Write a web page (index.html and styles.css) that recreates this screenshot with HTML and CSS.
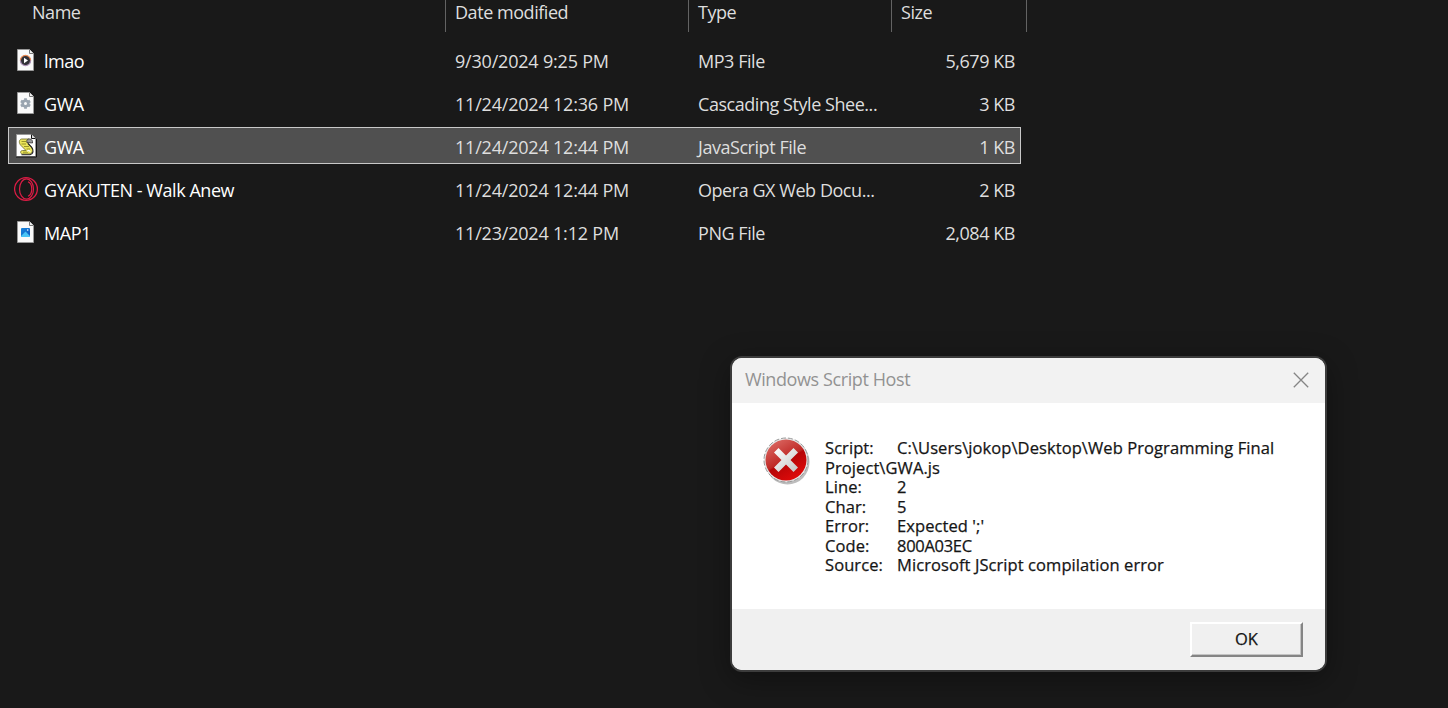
FILE: index.html
```html
<!DOCTYPE html>
<html lang="en">
<head>
<meta charset="utf-8">
<title>Files</title>
<link rel="stylesheet" href="styles.css">
</head>
<body>
<main class="explorer">
  <div class="head">
    <div class="col first"><span>Name</span></div>
    <div class="col"><span>Date modified</span></div>
    <div class="col"><span>Type</span></div>
    <div class="col"><span>Size</span></div>
  </div>
  <div class="row">
    <svg class="icon" viewBox="0 0 26 26"><path d="M3.500 2.500h12l4 4v17h-16z" fill="#f9f9f9" stroke="#999"/><path d="M15.500 2.500v4h4" fill="#eee" stroke="#777"/><circle cx="11.500" cy="13.500" r="5.100" fill="#303036"/><path d="M6.400 13.500a5.100 5.100 0 0 1 10.200 0" fill="none" stroke="#e98952" stroke-width="1.200"/><path d="M6.400 13.500a5.100 5.100 0 0 0 10.200 0" fill="none" stroke="#ac91b7" stroke-width="1.200"/><path d="M10 10.800v5.400l4-2.700z" fill="#fff"/></svg>
    <span class="name">lmao</span><span class="date">9/30/2024 9:25 PM</span><span class="type">MP3 File</span><span class="size">5,679 KB</span>
  </div>
  <div class="row">
    <svg class="icon" viewBox="0 0 26 26"><path d="M3.500 2.500h12l4 4v17h-16z" fill="#f9f9f9" stroke="#999"/><path d="M15.500 2.500v4h4" fill="#eee" stroke="#777"/><circle cx="11.500" cy="13.500" r="2.800" fill="none" stroke="#9aa5b0" stroke-width="2.600"/><path d="M11.500 8.200v2.200M11.500 16.600v2.200M6.900 10.900l2 1.100M14.100 15l2 1.100M16.100 10.900l-2 1.100M8.900 15l-2 1.100" stroke="#9aa5b0" stroke-width="2.800"/></svg>
    <span class="name">GWA</span><span class="date">11/24/2024 12:36 PM</span><span class="type">Cascading Style Shee...</span><span class="size">3 KB</span>
  </div>
  <div class="row selected">
    <svg class="icon" viewBox="0 0 26 26"><path d="M2.500 1.500h15l4 4v18h-19z" fill="#fff" stroke="#999"/><path d="M2 24h20.500V6" fill="none" stroke="#111"/><path d="M17.500 1.500v4h4" fill="#ddd" stroke="#111"/><path d="M7.500 6H15l-2 3.500 4.500 4.500c2 3 1 6-1.500 7H8.500c-2.500 0-2.500-3.500 0-3.500H12L7 12.500C4.500 10 5 6.500 7.500 6z" fill="#ece65a" stroke="#77753a" stroke-width=".9"/><path d="M13 9.500c-1-2.500 1-4 3-3.500 2 .3 2.800 2 2.500 4z" fill="#999" stroke="#333" stroke-width=".8"/><path d="M7.500 8.500h4.500M7.500 11H12M10 13.500h5M12.500 16H16M9 19.200h5" stroke="#8f8b25" stroke-width=".9"/><path d="M7.500 21.700h8.500c3.500-.5 4-4.500 1.500-7.500L14 10.500" fill="none" stroke="#222" stroke-width="1.100"/><path d="M13.500 18.500c.5-2 3-1 2.500.7" fill="none" stroke="#fff" stroke-width="1.200"/></svg>
    <span class="name">GWA</span><span class="date">11/24/2024 12:44 PM</span><span class="type">JavaScript File</span><span class="size">1 KB</span>
  </div>
  <div class="row">
    <svg class="icon" viewBox="0 0 26 26"><g fill="none" stroke="#dc1c45"><circle cx="12" cy="13" r="11.400" stroke-width="1.300"/><ellipse cx="12.500" cy="13" rx="7" ry="10.200" stroke-width="1.200"/><path d="M14 5.800c5 2 5 12.400 0 14.400" stroke-width="1.200"/></g></svg>
    <span class="name">GYAKUTEN - Walk Anew</span><span class="date">11/24/2024 12:44 PM</span><span class="type">Opera GX Web Docu...</span><span class="size">2 KB</span>
  </div>
  <div class="row">
    <svg class="icon" viewBox="0 0 26 26"><defs><linearGradient id="pic" x2="1" y2="1"><stop stop-color="#1687df"/><stop offset="1" stop-color="#0d54ba"/></linearGradient></defs><path d="M3.500 2.500h12l4 4v17h-16z" fill="#f9f9f9" stroke="#999"/><path d="M15.500 2.500v4h4" fill="#eee" stroke="#777"/><rect x="7" y="9" width="9" height="9" rx="1" fill="url(#pic)"/><path d="M7 17l4.500-4.500L16 17v1H7z" fill="#48c3f5"/><circle cx="13.700" cy="11" r=".8" fill="#fff"/></svg>
    <span class="name">MAP1</span><span class="date">11/23/2024 1:12 PM</span><span class="type">PNG File</span><span class="size">2,084 KB</span>
  </div>
</main>
<section class="dialog" role="dialog">
  <header class="titlebar"><span class="title">Windows Script Host</span><svg class="close" viewBox="0 0 16 16"><path d="M.8.800l14.400 14.400M15.200.800L.8 15.200" stroke="#858585" stroke-width="1.300"/></svg></header>
  <div class="content">
    <svg class="error" viewBox="0 0 48 50"><defs><linearGradient id="red" x1=".2" y1="0" x2=".8" y2="1"><stop stop-color="#dc6a64"/><stop offset=".48" stop-color="#bf2926"/><stop offset=".52" stop-color="#b50507"/><stop offset="1" stop-color="#e60b0b"/></linearGradient><linearGradient id="silver" x2="1" y2="1"><stop stop-color="#fff"/><stop offset="1" stop-color="#c4c4c4"/></linearGradient></defs><ellipse cx="24.500" cy="25" rx="22" ry="22.500" fill="#999" opacity=".65"/><circle cx="23" cy="23" r="22" fill="#e7e7e7" stroke="#999" stroke-width="1" stroke-dasharray="5 2"/><circle cx="23" cy="23" r="20.500" fill="url(#red)"/><path d="M15.500 11l7.500 7.500 7.500-7.500 4.500 4.500-7.500 7.500 7.500 7.500-4.500 4.500-7.500-7.500-7.500 7.500-4.500-4.500 7.500-7.500-7.500-7.500z" fill="url(#silver)"/></svg>
    <div class="message">
      <div class="line"><span class="label">Script:</span><span class="path">C:\Users\jokop\Desktop\Web Programming Final</span></div>
      <div class="line"><span>Project\GWA.js</span></div>
      <div class="line"><span class="label">Line:</span><span>2</span></div>
      <div class="line"><span class="label">Char:</span><span>5</span></div>
      <div class="line"><span class="label">Error:</span><span>Expected ';'</span></div>
      <div class="line"><span class="label">Code:</span><span class="code">800A03EC</span></div>
      <div class="line"><span class="label">Source:</span><span>Microsoft JScript compilation error</span></div>
    </div>
  </div>
  <footer class="footer"><button class="ok">OK</button></footer>
</section>
</body>
</html>
```
FILE: styles.css
```css
* { box-sizing: border-box; }
body { margin: 0; width: 1448px; height: 708px; overflow: hidden; background: #191919; color: #dedede; font: 18px/24px "Open Sans", "Noto Sans", sans-serif; letter-spacing: -.45px; white-space: nowrap; }
.explorer { display: flex; flex-direction: column; padding-left: 8px; width: 1027px; }
.head { display: grid; grid-template-columns: 438px 243px 203px 135px; height: 32px; margin-bottom: 9px; }
.col { border-right: 1px solid #636363; padding: 0 0 0 9px; }
.first { padding-left: 24px; }
.row { display: grid; grid-template-columns: 36px 411px 243px 180px 136px; align-items: center; width: 1013px; height: 37px; margin-bottom: 6px; border: 1px solid transparent; }
.row > * { margin-left: -1px; }
.row > span { padding-top: 2px; }
.row > .icon { width: 26px; height: 26px; margin-left: 5px; }
.selected { background: #505050; border-color: #c8c8c8; }
.name { color: #fff; }
.date { letter-spacing: -.2px; }
.size { text-align: right; }
.dialog { position: absolute; left: 730px; top: 356px; width: 597px; height: 316px; border: 2px solid #3c3c3c; border-radius: 12px; background: #fff; box-shadow: 0 8px 30px rgba(0,0,0,.35); display: flex; flex-direction: column; overflow: hidden; }
.titlebar { height: 45px; background: #f2f2f2; color: #929292; display: flex; align-items: center; justify-content: space-between; padding: 0 16px 2px 13px; letter-spacing: -.4px; }
.title { padding-bottom: 1px; }
.close { width: 16px; height: 16px; }
.content { height: 206px; display: flex; padding: 34px 0 0 31px; color: #151515; }
.error { width: 48px; height: 50px; }
.message { margin: 1px 0 0 14px; font-size: 16.5px; line-height: 19.5px; letter-spacing: .08px; -webkit-text-stroke: .25px #151515; }
.line { display: flex; height: 19.5px; }
.label { width: 72px; }
.code { letter-spacing: -.3px; }
.footer { height: 61px; background: #f0f0f0; display: flex; justify-content: flex-end; padding: 13px 22px 0; }
.ok { width: 113px; height: 35px; border: 2px solid; border-color: #fff #858585 #858585 #fff; box-shadow: inset -1px -1px #c4c4c4; background: #f0f0f0; font: 16.5px "Open Sans", sans-serif; color: #151515; padding: 0 0 2px; -webkit-text-stroke: .25px #151515; }
```
